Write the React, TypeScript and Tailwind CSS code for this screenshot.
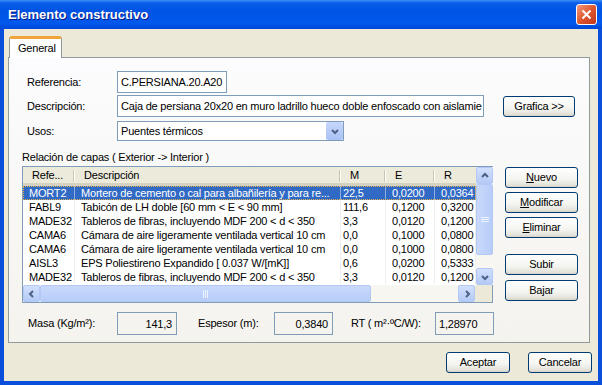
import React from "react";

const rows = [
  ["MORT2", "Mortero de cemento o cal para albañilería y para re...", "22,5", "0,0200", "0,0364"],
  ["FABL9", "Tabicón de LH doble [60 mm < E < 90 mm]", "111,6", "0,1200", "0,3200"],
  ["MADE32", "Tableros de fibras, incluyendo MDF 200 < d < 350", "3,3", "0,0120", "0,1200"],
  ["CAMA6", "Cámara de aire ligeramente ventilada vertical 10 cm", "0,0", "0,1000", "0,0800"],
  ["CAMA6", "Cámara de aire ligeramente ventilada vertical 10 cm", "0,0", "0,1000", "0,0800"],
  ["AISL3", "EPS Poliestireno Expandido [ 0.037 W/[mK]]", "0,6", "0,0200", "0,5333"],
  ["MADE32", "Tableros de fibras, incluyendo MDF 200 < d < 350", "3,3", "0,0120", "0,1200"],
];

function XpButton({ children, className = "" }: { children: React.ReactNode; className?: string }) {
  return (
    <div
      className={`flex items-center justify-center h-[21px] rounded-[3px] border border-[#003C74] bg-[linear-gradient(to_bottom,#FFFFFF_0%,#F4F4F0_60%,#E3E2DA_90%,#D6D0C5_100%)] text-black ${className}`}
    >
      {children}
    </div>
  );
}

function Arrow({ dir }: { dir: "up" | "down" | "left" | "right" }) {
  const d = {
    up: "M3 7 L6 4 L9 7",
    down: "M3 5 L6 8 L9 5",
    left: "M7 3 L4 6 L7 9",
    right: "M5 3 L8 6 L5 9",
  }[dir];
  return (
    <svg width="12" height="12" viewBox="0 0 12 12">
      <path d={d} fill="none" stroke="#4D6185" strokeWidth="2" />
    </svg>
  );
}

function ScrollBtn({ dir }: { dir: "up" | "down" | "left" | "right" }) {
  return (
    <div className="w-[17px] h-[17px] shrink-0 flex items-center justify-center rounded-[2px] border border-[#B4C8F6] bg-[linear-gradient(to_bottom,#D2E0FD,#B4CAF6)]">
      <Arrow dir={dir} />
    </div>
  );
}

export default function App() {
  const cols = ["w-[52px]", "w-[266px]", "w-[45px]", "w-[49px]", "w-[41px]"];
  return (
    <div className="w-[602px] h-[385px] flex flex-col overflow-hidden font-['Liberation_Sans',Arial,sans-serif] text-[11px] text-black">
      {/* title bar */}
      <div className="h-[29px] shrink-0 flex items-center justify-between pl-[8px] pr-[5px] bg-[linear-gradient(to_bottom,#3C8FF5_0%,#0A5EEB_10%,#0054E3_35%,#0058EC_80%,#0048D8_100%)]">
        <span className="text-white font-bold text-[13px] pt-[1px] [text-shadow:1px_1px_#0A1883]">Elemento constructivo</span>
        <div className="w-[21px] h-[21px] rounded-[3px] border border-white flex items-center justify-center bg-[linear-gradient(135deg,#F09A7E,#E0572F_50%,#C2361B)]">
          <svg width="11" height="11" viewBox="0 0 11 11">
            <path d="M1.5 1.5 L9.5 9.5 M9.5 1.5 L1.5 9.5" stroke="white" strokeWidth="2" />
          </svg>
        </div>
      </div>

      {/* body */}
      <div className="flex-1 flex flex-col bg-[#ECE9D8] border-x-4 border-b-4 border-[#0A4FDB] tracking-[-0.2px]">
        <div className="mt-[7px] ml-[5px] flex">
          <div className="relative z-10 -mb-px w-[53px] h-[22px] bg-white border-x border-[#919B9C] border-t-[3px] border-t-[#F0A53A] rounded-t-[3px] pl-[8px] pt-[1px]">
            General
          </div>
        </div>
        <div className="ml-[4px] w-[582px] h-[286px] border border-[#919B9C] bg-[linear-gradient(to_bottom,#FCFCFE,#F4F3EE)] flex flex-col">
          {/* form */}
          <div className="mt-[13px] flex items-center h-[22px] pl-[18px]">
            <span className="w-[90px]">Referencia:</span>
            <div className="w-[110px] h-[22px] border border-[#7F9DB9] bg-white flex items-center pl-[3px]">C.PERSIANA.20.A20</div>
          </div>
          <div className="mt-[2px] flex items-center h-[22px] pl-[18px]">
            <span className="w-[90px]">Descripción:</span>
            <div className="w-[367px] h-[22px] border border-[#7F9DB9] bg-white flex items-center pl-[3px] overflow-hidden whitespace-nowrap">
              Caja de persiana 20x20 en muro ladrillo hueco doble enfoscado con aislamie
            </div>
            <XpButton className="ml-[19px] w-[72px]">Grafica &gt;&gt;</XpButton>
          </div>
          <div className="mt-[4px] flex items-center h-[20px] pl-[18px]">
            <span className="w-[90px]">Usos:</span>
            <div className="w-[227px] h-[20px] border border-[#7F9DB9] bg-white flex items-center justify-between pl-[3px]">
              <span>Puentes térmicos</span>
              <div className="w-[17px] h-[18px] flex items-center justify-center rounded-[2px] bg-[linear-gradient(to_bottom,#C6D7FC,#A9C1F3)]">
                <Arrow dir="down" />
              </div>
            </div>
          </div>

          <div className="mt-[9px] ml-[13px] h-[15px] leading-[15px]">Relación de capas ( Exterior -&gt; Interior )</div>

          <div className="mt-[1px] flex">
            {/* table */}
            <div className="ml-[13px] w-[471px] h-[137px] border border-[#7F9DB9] bg-white flex flex-col">
              <div className="flex h-[118px]">
                <div className="w-[453px] flex flex-col">
                  <div className="h-[19px] flex bg-[#EBEADB] border-b-[3px] border-[#D6D2C2]">
                    {["Refe...", "Descripción", "M", "E", "R"].map((h, i) => (
                      <div key={i} className={`${cols[i]} relative flex items-center pl-[9px]`}>
                        {h}
                        {i < 4 && <div className="absolute right-0 top-[3px] h-[12px] w-[2px] border-l border-[#C7C5B2] border-r border-r-white" />}
                      </div>
                    ))}
                  </div>
                  {rows.map((r, ri) => (
                    <div
                      key={ri}
                      className={`h-[14px] flex leading-[14px] ${ri === 0 ? "bg-[#316AC5] text-white outline-1 outline-dotted outline-offset-[-1px] outline-[#E3B04A]" : ""}`}
                    >
                      {r.map((c, ci) => (
                        <div
                          key={ci}
                          className={`${cols[ci]} overflow-hidden whitespace-nowrap border-r ${ri === 0 ? "border-[#8FAEE0]" : "border-[#EFEFEF]"} ${ci === 2 ? "pl-[2px]" : "pl-[6px]"}`}
                        >
                          {c}
                        </div>
                      ))}
                    </div>
                  ))}
                </div>
                {/* vertical scrollbar */}
                <div className="w-[17px] flex flex-col bg-[#F7F6F0]">
                  <ScrollBtn dir="up" />
                  <div className="h-[71px] rounded-[2px] border border-[#B4C8F6] bg-[linear-gradient(to_right,#C9D9FC,#B7CDF8)] flex items-center justify-center">
                    <svg width="8" height="8" viewBox="0 0 8 8">
                      <path d="M0 1.5 H8 M0 3.5 H8 M0 5.5 H8" stroke="#EEF4FE" strokeWidth="1" />
                    </svg>
                  </div>
                  <div className="flex-1" />
                  <ScrollBtn dir="down" />
                </div>
              </div>
              {/* horizontal scrollbar */}
              <div className="flex h-[17px]">
                <div className="w-[453px] flex bg-[#F7F6F0]">
                  <ScrollBtn dir="left" />
                  <div className="w-[331px] rounded-[2px] border border-[#B4C8F6] bg-[linear-gradient(to_bottom,#C9D9FC,#B7CDF8)] flex items-center justify-center">
                    <svg width="8" height="8" viewBox="0 0 8 8">
                      <path d="M1.5 0 V8 M3.5 0 V8 M5.5 0 V8" stroke="#EEF4FE" strokeWidth="1" />
                    </svg>
                  </div>
                  <div className="flex-1" />
                  <ScrollBtn dir="right" />
                </div>
                <div className="w-[17px] bg-[#ECE9D8]" />
              </div>
            </div>

            {/* side buttons */}
            <div className="ml-[12px] w-[73px] flex flex-col">
              <XpButton className="mt-[1px]">
                <span><span className="underline">N</span>uevo</span>
              </XpButton>
              <XpButton className="mt-[4px]">
                <span><span className="underline">M</span>odificar</span>
              </XpButton>
              <XpButton className="mt-[4px]">
                <span><span className="underline">E</span>liminar</span>
              </XpButton>
              <XpButton className="mt-[16px]">Subir</XpButton>
              <XpButton className="mt-[5px]">Bajar</XpButton>
            </div>
          </div>

          {/* totals */}
          <div className="mt-[9px] flex items-center h-[23px]">
            <span className="ml-[19px] w-[89px]">Masa (Kg/m²):</span>
            <div className="w-[60px] h-[23px] border border-[#7F9DB9] flex justify-end pr-[4px] pt-[3px]">141,3</div>
            <span className="ml-[21px] w-[76px]">Espesor (m):</span>
            <div className="w-[59px] h-[23px] border border-[#7F9DB9] flex justify-end pr-[4px] pt-[3px]">0,3840</div>
            <span className="ml-[18px] w-[84px]">RT ( m²·ºC/W):</span>
            <div className="w-[59px] h-[23px] border border-[#7F9DB9] flex pl-[3px] pt-[3px]">1,28970</div>
          </div>
        </div>

        {/* dialog buttons */}
        <div className="mt-[9px] flex justify-end pr-[6px] gap-[18px]">
          <XpButton className="w-[64px]">Aceptar</XpButton>
          <XpButton className="w-[64px]">Cancelar</XpButton>
        </div>
      </div>
    </div>
  );
}
